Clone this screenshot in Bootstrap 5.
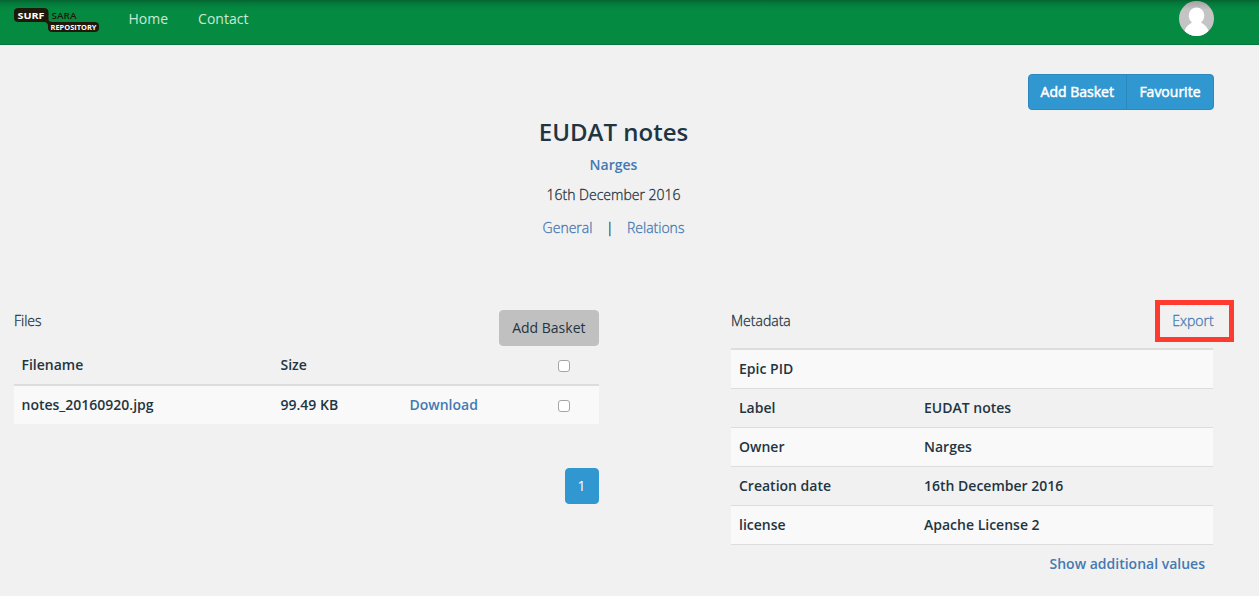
<!DOCTYPE html>
<html lang="en">
<head>
<meta charset="utf-8">
<meta name="viewport" content="width=device-width, initial-scale=1">
<title>EUDAT notes</title>
<link href="https://cdn.jsdelivr.net/npm/bootstrap@5.3.0/dist/css/bootstrap.min.css" rel="stylesheet">
<style>
body{background:#f1f1f1;color:#1f3542;font:300 14px/20px "Open Sans",sans-serif;overflow:hidden;-webkit-text-stroke:.3px}
a{color:#4479b2;text-decoration:none}
.page{width:1200px;margin-left:14px}
.topbar{height:45px;background:linear-gradient(#046430 0,#04783a 3px,#04853f 7px,#058a42 11px);border-bottom:1px solid #06763a}
.topbar svg{-webkit-text-stroke:0}
.topbar .nav-link{color:#cbe8d7;padding:0;line-height:20px;font-weight:400;-webkit-text-stroke:0}
.topbar svg{display:block}
.nav-items{margin:9px 0 0 28.500px;gap:30px}
.avatar{margin-top:1px}
.btn{font-size:14px;line-height:20px;padding:7px 12px;border-radius:4px;font-weight:400;-webkit-text-stroke:0}
.btn-blue,.btn-blue:hover{background:#3097d1;border-color:#2a88bd;color:#fff}
.btn-group .btn{-webkit-text-stroke:.5px;padding-right:12.500px}
.pager-item{border-color:#3097d1!important;padding-right:12.500px;padding-left:11.500px}
.btn-grey{background:#c0c0c0;border-color:#c0c0c0;color:#1f3542;padding:7px 12.500px 7px 12px}
.title{font-size:24px;line-height:32px;font-weight:600;margin:0}
.record-head{padding-top:6px;height:190px;margin-right:1px}
.files{width:585px}
.meta{width:482px}
.fw-semibold,.grid-table,.title{-webkit-text-stroke:0}
.grid-table{table-layout:fixed;margin:0;font-weight:600;--bs-table-bg:transparent;--bs-table-color:#1f3542}
.grid-table>*>tr>*{padding:0 8px;height:39px;border-bottom:0;vertical-align:middle;box-shadow:none;font-weight:600;color:#1f3542}
.files .grid-table>thead>tr>th{border-bottom:2px solid #ddd;height:39px}
.files .grid-table>tbody>tr>td{height:39px}
.files .grid-table>*>tr>:first-child{padding-left:7.500px}
.stripe{background:#f9f9f9}
.meta table{border-top:2px solid #ddd}
.meta .grid-table>*>tr>*{border-bottom:1px solid #ddd}
input[type=checkbox]{appearance:none;display:block;width:12px;height:12px;margin:2px 0 0 1px;background:#fff;border:1px solid #a5a5a5;border-radius:3px}
.export{width:79px;height:42px;border:5px solid #ff3b30;margin-right:-21px;padding-right:3px}
</style>
</head>
<body>
<nav class="topbar">
  <div class="page d-flex align-items-start">
    <svg width="86" height="33" viewBox="0 0 86 33" font-family="Open Sans,sans-serif">
      <path d="M4.500 8H30Q34.500 8 34.500 12.500V19Q34.500 22 38 22H80.500Q85 22 85 26V28Q85 32 80.500 32H38.500Q34 32 34 28V25Q33 22 30 22H4.500Q0 22 0 18V12Q0 8 4.500 8Z" fill="#20190b"/>
      <text x="3.500" y="18.800" font-size="9.500" font-weight="700" fill="#fff" textLength="27" lengthAdjust="spacingAndGlyphs">SURF</text>
      <text x="37.500" y="18.500" font-size="9" font-weight="600" fill="#20190b" textLength="25" lengthAdjust="spacingAndGlyphs">SARA</text>
      <text x="36.500" y="29.700" font-size="7.500" font-weight="700" fill="#fff" textLength="46" lengthAdjust="spacingAndGlyphs">REPOSITORY</text>
    </svg>
    <div class="nav-items d-flex">
      <a class="nav-link" href="#">Home</a><a class="nav-link" href="#">Contact</a>
    </div>
    <svg class="avatar ms-auto" width="35" height="35" viewBox="0 0 35 35">
      <defs><clipPath id="disc"><circle cx="17.500" cy="17.500" r="17.500"/></clipPath><linearGradient id="g" x2="0" y2="1"><stop stop-color="#a2a2a2"/><stop offset=".25" stop-color="#c4c4c4"/></linearGradient></defs>
      <g clip-path="url(#disc)"><path d="M0 0H35V35H0Z" fill="url(#g)"/><path d="M5 34C5 27 9 24 13 21.500C11 19.500 9.700 17.500 9.700 14.500A7.800 8 0 0 1 25.300 14.500C25.300 17.500 24 19.500 22 21.500C26 24 30 27 30 34V36H5Z" fill="#fff"/></g>
    </svg>
  </div>
</nav>
<main class="page">
  <div class="d-flex justify-content-end" style="padding-top:29px">
    <div class="btn-group"><a class="btn btn-blue" href="#">Add Basket</a><a class="btn btn-blue" href="#">Favourite</a></div>
  </div>
  <header class="record-head text-center">
    <h1 class="title">EUDAT notes</h1>
    <div style="margin-top:7px"><a class="fw-semibold" href="#">Narges</a></div>
    <div style="margin-top:10px">16th December 2016</div>
    <div class="d-flex justify-content-center" style="margin-top:13px;gap:13.500px"><a href="#">General</a><a>|</a><a href="#">Relations</a></div>
  </header>
  <div class="d-flex justify-content-between align-items-start">
    <section class="files" style="margin-top:10px">
      <div class="d-flex justify-content-between"><div style="margin-top:1px">Files</div><button class="btn btn-grey">Add Basket</button></div>
      <table class="table grid-table">
        <colgroup><col style="width:258.500px"><col style="width:129px"><col style="width:147.500px"><col></colgroup>
        <thead><tr><th>Filename</th><th>Size</th><th></th><th><input type="checkbox" aria-label="All files"></th></tr></thead>
        <tbody><tr class="stripe"><td>notes_20160920.jpg</td><td>99.49 KB</td><td><a href="#">Download</a></td><td><input type="checkbox" aria-label="Select file"></td></tr></tbody>
      </table>
      <div class="d-flex justify-content-end" style="margin-top:44px"><a class="btn btn-blue pager-item" href="#">1</a></div>
    </section>
    <section class="meta" style="margin-right:1px">
      <div class="d-flex justify-content-between" style="height:48px"><div style="margin-top:11px">Metadata</div><a href="#" class="export d-flex align-items-center justify-content-center">Export</a></div>
      <table class="table grid-table">
        <colgroup><col style="width:185px"><col></colgroup>
        <tbody>
        <tr class="stripe"><td>Epic PID</td><td></td></tr>
        <tr><td>Label</td><td>EUDAT notes</td></tr>
        <tr class="stripe"><td>Owner</td><td>Narges</td></tr>
        <tr><td>Creation date</td><td>16th December 2016</td></tr>
        <tr class="stripe"><td>license</td><td>Apache License 2</td></tr>
        </tbody>
      </table>
      <div class="text-end pe-2 fw-semibold" style="margin-top:9px"><a href="#">Show additional values</a></div>
    </section>
  </div>
</main>
<script src="https://cdn.jsdelivr.net/npm/bootstrap@5.3.0/dist/js/bootstrap.bundle.min.js"></script>
</body>
</html>
